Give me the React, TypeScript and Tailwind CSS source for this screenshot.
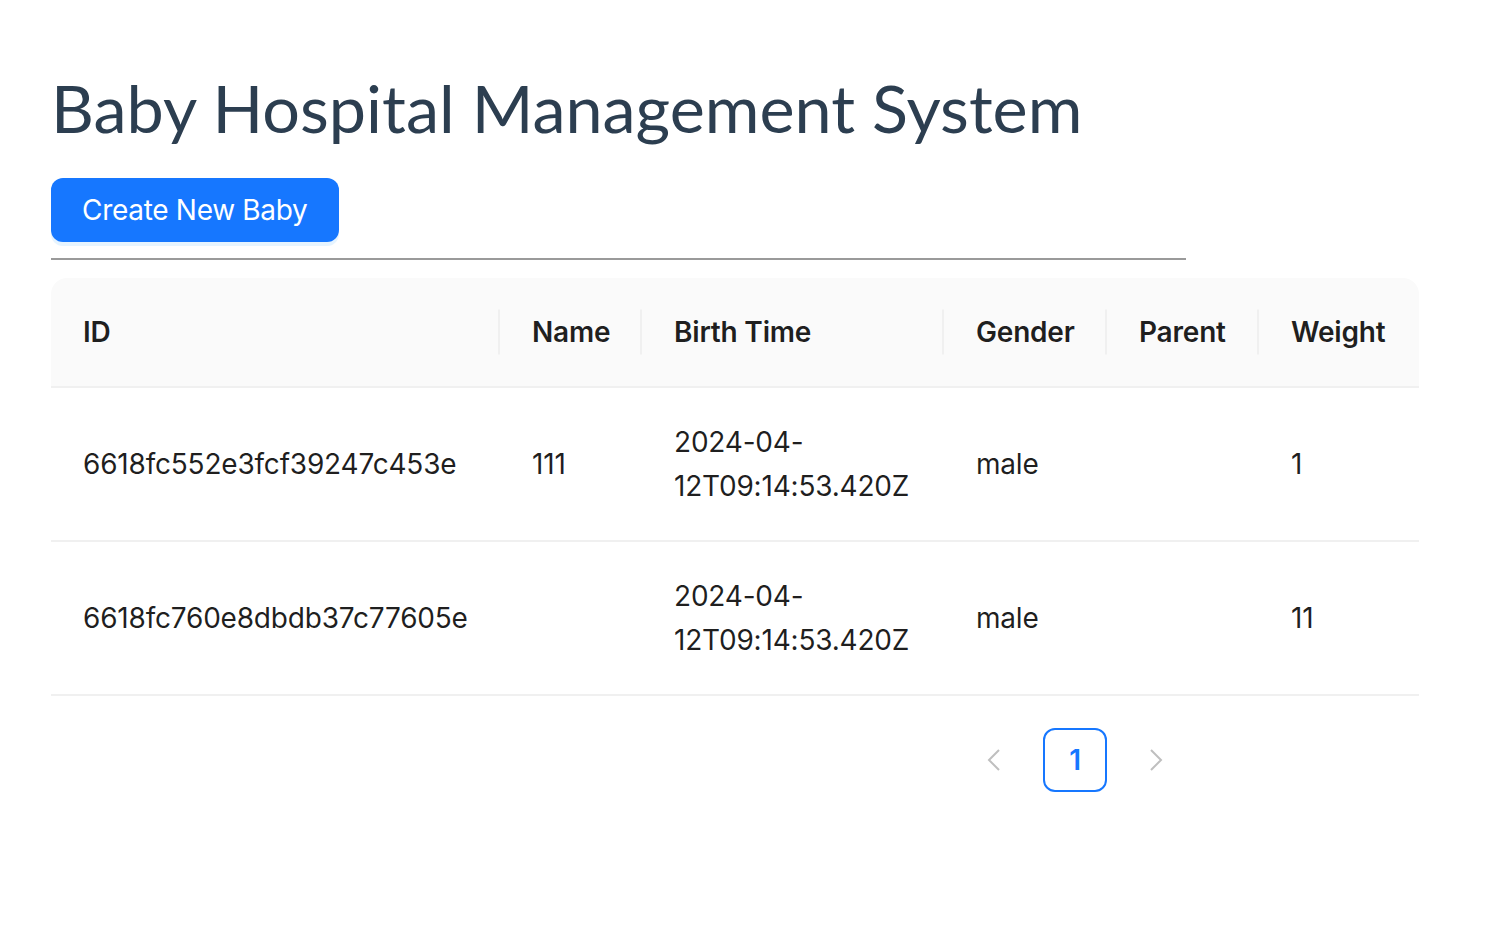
import React from 'react';

type Baby = {
  id: string;
  name: string;
  birthTime: string;
  gender: string;
  parent: string;
  weight: string;
};

const babies: Baby[] = [
  { id: '6618fc552e3fcf39247c453e', name: '111', birthTime: '2024-04-12T09:14:53.420Z', gender: 'male', parent: '', weight: '1' },
  { id: '6618fc760e8dbdb37c77605e', name: '', birthTime: '2024-04-12T09:14:53.420Z', gender: 'male', parent: '', weight: '11' },
];

const columns = [
  { key: 'id', title: 'ID', width: 'w-[449px]' },
  { key: 'name', title: 'Name', width: 'w-[142px]' },
  { key: 'birthTime', title: 'Birth Time', width: 'w-[302px]' },
  { key: 'gender', title: 'Gender', width: 'w-[163px]' },
  { key: 'parent', title: 'Parent', width: 'w-[152px]' },
  { key: 'weight', title: 'Weight', width: 'w-[160px]' },
] as const;

const App: React.FC = () => {
  return (
    <div className="min-h-screen bg-white pl-[51px] pt-[62px]">
      <h1 className="font-['Lato',sans-serif] text-[66.5px] leading-[90px] font-normal text-[#2c3e50]">
        Baby Hospital Management System
      </h1>

      <button
        type="button"
        className="mt-[26px] h-[64px] px-[31px] rounded-[12px] bg-[#1677ff] text-white text-[28px] tracking-[-0.3px] font-['Inter',sans-serif] shadow-[0_4px_0_rgba(5,145,255,0.1)]"
      >
        Create New Baby
      </button>

      <hr className="mt-[16px] w-[1135px] border-0 border-t-2 border-[#9a9a9a]" />

      <div className="mt-[18px] w-[1368px] font-['Inter',sans-serif] text-[28px] leading-[44px] tracking-[-0.2px] text-[rgba(0,0,0,0.88)]">
        <table className="w-full table-fixed border-collapse">
          <thead>
            <tr>
              {columns.map((c, i) => (
                <th
                  key={c.key}
                  className={`${c.width} relative bg-[#fafafa] border-b-2 border-[#f0f0f0] px-[32px] py-[32px] text-left font-semibold ${i === 0 ? 'rounded-tl-[16px]' : ''} ${i === columns.length - 1 ? 'rounded-tr-[16px]' : ''}`}
                >
                  {c.title}
                  {i < columns.length - 1 && (
                    <span className="absolute right-0 top-1/2 -translate-y-1/2 h-[45px] w-[2px] bg-[#f0f0f0]" />
                  )}
                </th>
              ))}
            </tr>
          </thead>
          <tbody>
            {babies.map((b) => (
              <tr key={b.id}>
                {columns.map((c) => (
                  <td key={c.key} className="border-b-2 border-[#f0f0f0] px-[32px] py-[32px] break-words align-middle">
                    {c.key === 'birthTime' ? (
                      <>
                        2024-04-
                        <br />
                        12T09:14:53.420Z
                      </>
                    ) : (
                      b[c.key]
                    )}
                  </td>
                ))}
              </tr>
            ))}
          </tbody>
        </table>

        <div className="mt-[32px] flex w-[1136px] justify-end gap-[16px]">
          <button type="button" className="h-[64px] w-[64px] flex items-center justify-center text-[#bfbfbf]">
            <svg width="24" height="24" viewBox="0 0 24 24" fill="none" stroke="currentColor" strokeWidth="2">
              <path d="M16 2 L6 12 L16 22" />
            </svg>
          </button>
          <button
            type="button"
            className="h-[64px] w-[64px] rounded-[12px] border-2 border-[#1677ff] text-[#1677ff] font-semibold text-[28px] flex items-center justify-center"
          >
            1
          </button>
          <button type="button" className="h-[64px] w-[64px] flex items-center justify-center text-[#bfbfbf]">
            <svg width="24" height="24" viewBox="0 0 24 24" fill="none" stroke="currentColor" strokeWidth="2">
              <path d="M8 2 L18 12 L8 22" />
            </svg>
          </button>
        </div>
      </div>
    </div>
  );
};

export default App;
